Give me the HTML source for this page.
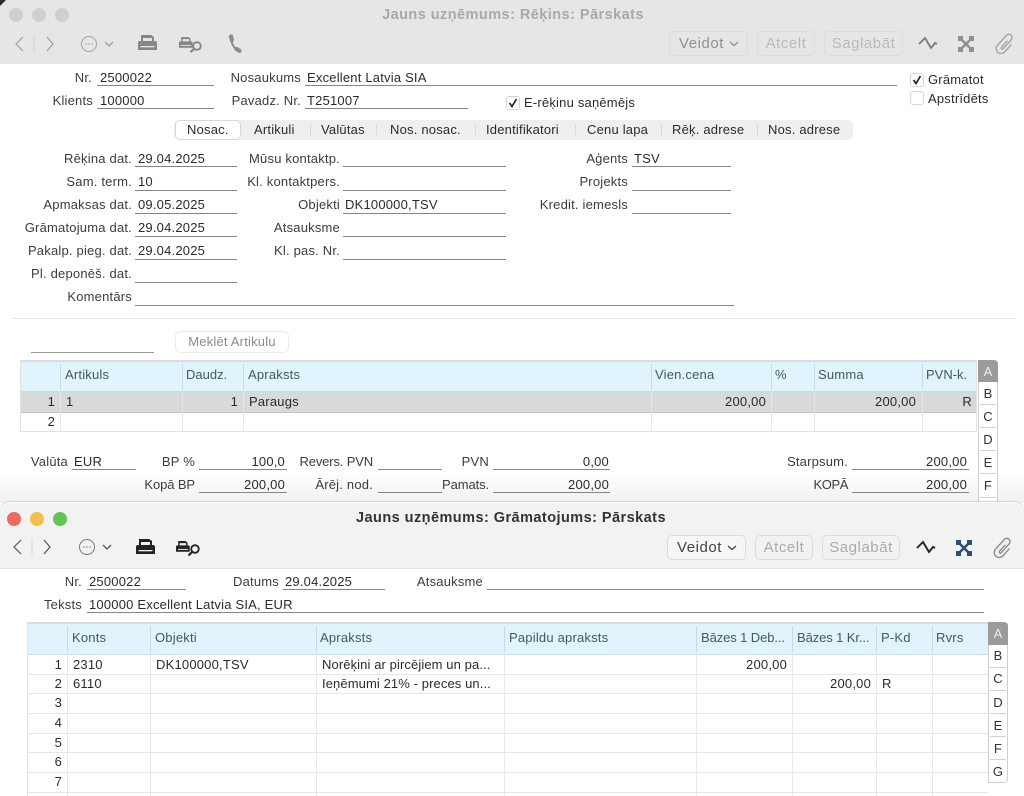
<!DOCTYPE html>
<html lang="lv"><head><meta charset="utf-8"><title>Jauns uzņēmums</title>
<style>
html,body{margin:0;padding:0;background:#fff}
body{position:relative;width:1024px;height:796px;overflow:hidden;font-family:"Liberation Sans",sans-serif;font-size:13px;letter-spacing:.2px;color:#2b2b2b}
#w{left:0;top:0;width:1024px;height:796px;overflow:hidden;filter:blur(.3px)}
div,svg{position:absolute}
.t{white-space:nowrap;line-height:16px;height:16px}
.l{color:#3c3c3c}
.h{color:#3f5a66}
.u{height:1px;background:#858585}
.v{width:1px;background:#e8e8e8}
.hr{height:1px;background:#e6e6e6}
.hs{width:1px;background:#c5dbe6;height:26px}
.btn{border:1px solid #dcdcdc;border-radius:5px;box-sizing:border-box;height:25px;line-height:23px;text-align:center;font-size:15px;letter-spacing:.55px}
.tb{width:20px;text-align:center;line-height:16px;color:#333}
.sep{width:16px;height:1px;background:#d2d2d2}
.ti{font-weight:bold;font-size:14.5px;letter-spacing:.45px}
</style></head><body><div id="w">

<!-- WINDOW 1 -->
<div style="left:0;top:0;width:1024px;height:64px;background:#e6e6e5"></div>
<div style="left:0;top:0;width:6px;height:6px;background:#2a2a2a;clip-path:polygon(0 0,100% 0,0 100%)"></div>
<div style="left:9px;top:8px;width:14px;height:14px;border-radius:50%;background:#cfcfcf"></div>
<div style="left:32px;top:8px;width:14px;height:14px;border-radius:50%;background:#cfcfcf"></div>
<div style="left:55px;top:8px;width:14px;height:14px;border-radius:50%;background:#cfcfcf"></div>
<div class="t ti" style="left:0;width:1026px;top:7px;text-align:center;color:#a9a9a9">Jauns uzņēmums: Rēķins: Pārskats</div>

<svg style="left:0;top:30px" width="300" height="30" fill="none" stroke="#a0a0a0">
<path d="M23 7l-7 7 7 7M47 7l6 7-6 7" stroke-width="1.200"/>
<path d="M34 6v16" stroke="#d0d0d0"/>
<circle cx="89" cy="14" r="7.500"/>
<path d="M85.500 14h1M88.500 14h1M91.500 14h1" stroke="#888" stroke-width="1.300"/>
<path d="M105 12l4 4 4-4" stroke-width="1.300"/>
<g transform="translate(138 5)" stroke="none" fill="#868686"><path d="M3 7V0h10l3 2v5h-2V3H5v4z"/><path d="M0 8a2 2 0 0 1 2-2h15a2 2 0 0 1 2 2v7H0z"/><rect x="2.500" y="11" width="14" height="1.300" fill="#e6e6e5"/></g>
<g transform="translate(179 7) scale(.72)" stroke="none" fill="#868686"><path d="M3 7V0h10l3 2v5h-2V3H5v4z"/><path d="M0 8a2 2 0 0 1 2-2h15a2 2 0 0 1 2 2v7H0z"/><rect x="2.500" y="11" width="14" height="1.300" fill="#e6e6e5"/></g>
<circle cx="197" cy="16" r="3.800" stroke="#868686" stroke-width="1.800"/><path d="M194 19l-3.500 3" stroke="#868686" stroke-width="2.200"/>
<path d="M231.500 8c-.5 5 2 10 7 12.500" stroke="#8a8a8a" stroke-width="2"/>
<path d="M231 6.500l.8 3.500M236.500 19l3 1.800" stroke="#8a8a8a" stroke-width="4.200" stroke-linecap="round"/>
</svg>

<div class="btn" style="left:669px;top:31px;width:79px;color:#8f8f8f;text-align:left;padding-left:9px">Veidot</div>
<svg style="left:728px;top:40px" width="12" height="8" fill="none" stroke="#8f8f8f" stroke-width="1.300"><path d="M2 2l4 3.500 4-3.500"/></svg>
<div class="btn" style="left:757px;top:31px;width:58px;color:#b9b9b9">Atcelt</div>
<div class="btn" style="left:824px;top:31px;width:79px;color:#b9b9b9">Saglabāt</div>
<svg style="left:915px;top:32px" width="105" height="24" fill="none">
<path d="M4 12l6-6 6 10 4-5 2 1" stroke="#7d7d7d" stroke-width="1.900"/>
<path d="M45 6l12 12M57 6L45 18" stroke="#909090" stroke-width="2.500"/>
<path d="M43 4h5v5h-5zM54 4h5v5h-5zM43 15h5v5h-5zM54 15h5v5h-5z" fill="#909090"/>
<g transform="translate(91 12) rotate(42) scale(1.100)"><path d="M4 -3V6a4.500 4.500 0 0 1 -9 0V-6a3 3 0 0 1 6 0V5a1 1 0 0 1 -2 0V-3" stroke="#a0a0a0" stroke-width="1.200"/></g>
</svg>

<div class="t l" style="right:932px;top:70px">Nr.</div><div class="t" style="left:100px;top:70px">2500022</div><div class="u" style="left:97px;top:85px;width:117px"></div>
<div class="t l" style="right:723px;top:70px">Nosaukums</div><div class="t" style="left:307px;top:70px">Excellent Latvia SIA</div><div class="u" style="left:305px;top:85px;width:592px"></div>
<div class="t l" style="right:931px;top:93px">Klients</div><div class="t" style="left:100px;top:93px">100000</div><div class="u" style="left:97px;top:108px;width:117px"></div>
<div class="t l" style="right:723px;top:93px">Pavadz. Nr.</div><div class="t" style="left:307px;top:93px">T251007</div><div class="u" style="left:305px;top:108px;width:163px"></div>

<div style="left:910px;top:73px;width:12px;height:12px;border:1px solid #d5d5d5;border-radius:3px;background:#fff"></div>
<svg style="left:910px;top:73px" width="14" height="14" fill="none" stroke="#222" stroke-width="1.700"><path d="M3.500 7l2.500 3.500 4.500-7.500"/></svg>
<div class="t" style="left:928px;top:72px">Grāmatot</div>
<div style="left:910px;top:91px;width:12px;height:12px;border:1px solid #d5d5d5;border-radius:3px;background:#fff"></div>
<div class="t" style="left:928px;top:91px">Apstrīdēts</div>
<div style="left:506px;top:96px;width:12px;height:12px;border:1px solid #d5d5d5;border-radius:3px;background:#fff"></div>
<svg style="left:506px;top:96px" width="14" height="14" fill="none" stroke="#222" stroke-width="1.700"><path d="M3.500 7l2.500 3.500 4.500-7.500"/></svg>
<div class="t" style="left:524px;top:95px">E-rēķinu saņēmējs</div>

<!-- tabs -->
<div style="left:174px;top:120px;width:679px;height:20px;background:#efefef;border-radius:6px"></div>
<div style="left:175px;top:120px;width:64px;height:18px;background:#fff;border:1px solid #d8d8d8;border-radius:5px"></div>
<div class="t" style="left:187px;top:122px">Nosac.</div>
<div class="t" style="left:254px;top:122px">Artikuli</div>
<div class="t" style="left:321px;top:122px">Valūtas</div>
<div class="t" style="left:390px;top:122px">Nos. nosac.</div>
<div class="t" style="left:486px;top:122px">Identifikatori</div>
<div class="t" style="left:587px;top:122px">Cenu lapa</div>
<div class="t" style="left:672px;top:122px">Rēķ. adrese</div>
<div class="t" style="left:768px;top:122px">Nos. adrese</div>
<div style="left:310px;top:124px;width:1px;height:11px;background:#d8d8d8"></div>
<div style="left:376px;top:124px;width:1px;height:11px;background:#d8d8d8"></div>
<div style="left:475px;top:124px;width:1px;height:11px;background:#d8d8d8"></div>
<div style="left:575px;top:124px;width:1px;height:11px;background:#d8d8d8"></div>
<div style="left:661px;top:124px;width:1px;height:11px;background:#d8d8d8"></div>
<div style="left:757px;top:124px;width:1px;height:11px;background:#d8d8d8"></div>

<!-- column 1 -->
<div class="t l" style="right:892px;top:151px">Rēķina dat.</div><div class="t" style="left:138px;top:151px">29.04.2025</div><div class="u" style="left:135px;top:166px;width:102px"></div>
<div class="t l" style="right:892px;top:174px">Sam. term.</div><div class="t" style="left:138px;top:174px">10</div><div class="u" style="left:135px;top:190px;width:102px"></div>
<div class="t l" style="right:892px;top:197px">Apmaksas dat.</div><div class="t" style="left:138px;top:197px">09.05.2025</div><div class="u" style="left:135px;top:213px;width:102px"></div>
<div class="t l" style="right:892px;top:220px">Grāmatojuma dat.</div><div class="t" style="left:138px;top:220px">29.04.2025</div><div class="u" style="left:135px;top:236px;width:102px"></div>
<div class="t l" style="right:892px;top:243px">Pakalp. pieg. dat.</div><div class="t" style="left:138px;top:243px">29.04.2025</div><div class="u" style="left:135px;top:259px;width:102px"></div>
<div class="t l" style="right:892px;top:266px">Pl. deponēš. dat.</div><div class="u" style="left:135px;top:282px;width:102px"></div>
<div class="t l" style="right:892px;top:289px">Komentārs</div><div class="u" style="left:135px;top:305px;width:599px"></div>
<!-- column 2 -->
<div class="t l" style="right:684px;top:151px">Mūsu kontaktp.</div><div class="u" style="left:343px;top:166px;width:163px"></div>
<div class="t l" style="right:684px;top:174px">Kl. kontaktpers.</div><div class="u" style="left:343px;top:190px;width:163px"></div>
<div class="t l" style="right:684px;top:197px">Objekti</div><div class="t" style="left:345px;top:197px">DK100000,TSV</div><div class="u" style="left:343px;top:213px;width:163px"></div>
<div class="t l" style="right:684px;top:220px">Atsauksme</div><div class="u" style="left:343px;top:236px;width:163px"></div>
<div class="t l" style="right:684px;top:243px">Kl. pas. Nr.</div><div class="u" style="left:343px;top:259px;width:163px"></div>
<!-- column 3 -->
<div class="t l" style="right:396px;top:151px">Aģents</div><div class="t" style="left:634px;top:151px">TSV</div><div class="u" style="left:632px;top:166px;width:99px"></div>
<div class="t l" style="right:396px;top:174px">Projekts</div><div class="u" style="left:632px;top:190px;width:99px"></div>
<div class="t l" style="right:396px;top:197px">Kredit. iemesls</div><div class="u" style="left:632px;top:213px;width:99px"></div>

<div class="hr" style="left:12px;top:318px;width:1004px"></div>
<div class="u" style="left:31px;top:352px;width:123px;background:#9a9a9a"></div>
<div style="left:175px;top:331px;width:114px;height:22px;box-sizing:border-box;border:1px solid #ececec;border-radius:5px;text-align:center;line-height:20px;color:#8a8a8a">Meklēt Artikulu</div>

<!-- table 1 -->
<div style="left:20px;top:360px;width:957px;height:72px;box-sizing:border-box;border:1px solid #e2e2e2;border-top:2px solid #dcdcdc"></div>
<div style="left:21px;top:362px;width:955px;height:30px;background:#e1f3fc"></div>
<div style="left:21px;top:391px;width:955px;height:2px;background:#c8dfe9"></div>
<div style="left:21px;top:393px;width:955px;height:19px;background:#d9d9d9"></div>
<div style="left:21px;top:412px;width:955px;height:1px;background:#c4c4c4"></div>
<div class="v" style="left:60px;top:393px;height:38px"></div><div class="v" style="left:182px;top:393px;height:38px"></div><div class="v" style="left:243px;top:393px;height:38px"></div><div class="v" style="left:651px;top:393px;height:38px"></div><div class="v" style="left:771px;top:393px;height:38px"></div><div class="v" style="left:814px;top:393px;height:38px"></div><div class="v" style="left:922px;top:393px;height:38px"></div>
<div class="hs" style="left:60px;top:364px"></div><div class="hs" style="left:182px;top:364px"></div><div class="hs" style="left:243px;top:364px"></div><div class="hs" style="left:651px;top:364px"></div><div class="hs" style="left:771px;top:364px"></div><div class="hs" style="left:814px;top:364px"></div><div class="hs" style="left:922px;top:364px"></div>
<div class="t h" style="left:65px;top:367px">Artikuls</div>
<div class="t h" style="left:186px;top:367px;letter-spacing:0">Daudz.</div>
<div class="t h" style="left:248px;top:367px">Apraksts</div>
<div class="t h" style="left:655px;top:367px">Vien.cena</div>
<div class="t h" style="left:775px;top:367px">%</div>
<div class="t h" style="left:818px;top:367px">Summa</div>
<div class="t h" style="left:926px;top:367px;letter-spacing:0">PVN-k.</div>
<div class="t" style="right:969px;top:394px">1</div><div class="t" style="left:66px;top:394px">1</div><div class="t" style="right:786px;top:394px">1</div><div class="t" style="left:249px;top:394px">Paraugs</div><div class="t" style="right:258px;top:394px">200,00</div><div class="t" style="right:108px;top:394px">200,00</div><div class="t" style="right:52px;top:394px">R</div>
<div class="t" style="right:969px;top:414px">2</div>

<!-- tab strip 1 -->
<div style="left:978px;top:360px;width:20px;height:150px;box-sizing:border-box;border:1px solid #cfcfcf;border-radius:0 4px 0 0;background:#fff"></div>
<div style="left:978px;top:360px;width:20px;height:22px;background:#9b9b9b;border-radius:0 4px 0 0"></div>
<div class="tb" style="left:978px;top:364px;color:#eee">A</div>
<div class="tb" style="left:978px;top:386px">B</div><div class="sep" style="left:980px;top:404px"></div>
<div class="tb" style="left:978px;top:409px">C</div><div class="sep" style="left:980px;top:427px"></div>
<div class="tb" style="left:978px;top:432px">D</div><div class="sep" style="left:980px;top:450px"></div>
<div class="tb" style="left:978px;top:455px">E</div><div class="sep" style="left:980px;top:473px"></div>
<div class="tb" style="left:978px;top:478px">F</div><div class="sep" style="left:980px;top:497px"></div>

<div style="left:0;top:470px;width:978px;height:33px;background:linear-gradient(rgba(236,236,236,0),rgba(236,236,236,.75))"></div>
<div style="left:998px;top:470px;width:26px;height:33px;background:linear-gradient(rgba(236,236,236,0),rgba(236,236,236,.75))"></div>

<!-- totals -->
<div class="t l" style="right:956px;top:454px">Valūta</div><div class="t" style="left:74px;top:454px">EUR</div><div class="u" style="left:72px;top:469px;width:64px"></div>
<div class="t l" style="right:829px;top:454px">BP %</div><div class="t" style="right:739px;top:454px">100,0</div><div class="u" style="left:199px;top:469px;width:88px"></div>
<div class="t l" style="right:651px;top:454px;letter-spacing:-.15px">Revers. PVN</div><div class="u" style="left:378px;top:469px;width:64px"></div>
<div class="t l" style="right:535px;top:454px">PVN</div><div class="t" style="right:415px;top:454px">0,00</div><div class="u" style="left:493px;top:469px;width:117px"></div>
<div class="t l" style="right:176px;top:454px">Starpsum.</div><div class="t" style="right:57px;top:454px">200,00</div><div class="u" style="left:852px;top:469px;width:117px"></div>
<div class="t l" style="right:829px;top:477px;letter-spacing:-.1px">Kopā BP</div><div class="t" style="right:739px;top:477px">200,00</div><div class="u" style="left:199px;top:492px;width:88px"></div>
<div class="t l" style="right:651px;top:477px">Ārēj. nod.</div><div class="u" style="left:378px;top:492px;width:64px"></div>
<div class="t l" style="right:535px;top:477px;letter-spacing:-.1px">Pamats.</div><div class="t" style="right:415px;top:477px">200,00</div><div class="u" style="left:493px;top:492px;width:117px"></div>
<div class="t l" style="right:176px;top:477px;letter-spacing:-.4px">KOPĀ</div><div class="t" style="right:57px;top:477px">200,00</div><div class="u" style="left:852px;top:492px;width:117px"></div>

<!-- WINDOW 2 -->
<div style="left:0;top:502px;width:1024px;height:294px;background:#fff;border-radius:10px 10px 0 0;box-shadow:0 -1px 1px #cfcfcf"></div>
<div style="left:0;top:503px;width:1024px;height:65px;background:#f2f2f1;border-bottom:1px solid #e0e0e0;border-radius:10px 10px 0 0"></div>
<div style="left:7px;top:512px;width:14px;height:14px;border-radius:50%;background:#ee6a5f"></div>
<div style="left:30px;top:512px;width:14px;height:14px;border-radius:50%;background:#f5bd4f"></div>
<div style="left:53px;top:512px;width:14px;height:14px;border-radius:50%;background:#61c554"></div>
<div class="t ti" style="left:0;width:1022px;top:510px;text-align:center;color:#333">Jauns uzņēmums: Grāmatojums: Pārskats</div>

<svg style="left:0;top:533px" width="300" height="30" fill="none" stroke="#555">
<path d="M21 7l-7 7 7 7M44 7l6 7-6 7" stroke-width="1.200"/>
<path d="M32 6v16" stroke="#d8d8d8"/>
<circle cx="87" cy="14" r="7.500" stroke="#777"/>
<path d="M83.500 14h1M86.500 14h1M89.500 14h1" stroke-width="1.300"/>
<path d="M103 12l4 4 4-4" stroke-width="1.300"/>
<g transform="translate(136 6)" stroke="none" fill="#222"><path d="M3 7V0h10l3 2v5h-2V3H5v4z"/><path d="M0 8a2 2 0 0 1 2-2h15a2 2 0 0 1 2 2v7H0z"/><rect x="2.500" y="11" width="14" height="1.300" fill="#f2f2f1"/></g>
<g transform="translate(176 8) scale(.72)" stroke="none" fill="#222"><path d="M3 7V0h10l3 2v5h-2V3H5v4z"/><path d="M0 8a2 2 0 0 1 2-2h15a2 2 0 0 1 2 2v7H0z"/><rect x="2.500" y="11" width="14" height="1.300" fill="#f2f2f1"/></g>
<circle cx="195" cy="16" r="3.800" stroke="#222" stroke-width="1.800"/><path d="M192 19l-3.500 3.500" stroke="#222" stroke-width="2.200"/>
</svg>

<div class="btn" style="left:667px;top:535px;width:79px;color:#444;background:#f6f6f5;text-align:left;padding-left:9px">Veidot</div>
<svg style="left:726px;top:544px" width="12" height="8" fill="none" stroke="#444" stroke-width="1.300"><path d="M2 2l4 3.500 4-3.500"/></svg>
<div class="btn" style="left:755px;top:535px;width:58px;color:#aaa">Atcelt</div>
<div class="btn" style="left:822px;top:535px;width:78px;color:#aaa">Saglabāt</div>
<svg style="left:913px;top:536px" width="105" height="24" fill="none">
<path d="M4 12l6-6 6 10 4-5 2 1" stroke="#222" stroke-width="1.900"/>
<path d="M45 6l12 12M57 6L45 18" stroke="#2d4f73" stroke-width="2.500"/>
<path d="M43 4h5v5h-5zM54 4h5v5h-5zM43 15h5v5h-5zM54 15h5v5h-5z" fill="#2d4f73"/>
<g transform="translate(91 12) rotate(42) scale(1.100)"><path d="M4 -3V6a4.500 4.500 0 0 1 -9 0V-6a3 3 0 0 1 6 0V5a1 1 0 0 1 -2 0V-3" stroke="#888" stroke-width="1.200"/></g>
</svg>

<div class="t l" style="right:942px;top:574px">Nr.</div><div class="t" style="left:89px;top:574px">2500022</div><div class="u" style="left:87px;top:589px;width:99px"></div>
<div class="t l" style="right:745px;top:574px">Datums</div><div class="t" style="left:285px;top:574px">29.04.2025</div><div class="u" style="left:283px;top:589px;width:102px"></div>
<div class="t l" style="right:541px;top:574px">Atsauksme</div><div class="u" style="left:487px;top:589px;width:497px"></div>
<div class="t l" style="right:942px;top:597px">Teksts</div><div class="t" style="left:89px;top:597px">100000 Excellent Latvia SIA, EUR</div><div class="u" style="left:87px;top:612px;width:897px"></div>

<!-- table 2 -->
<div style="left:27px;top:622px;width:962px;height:174px;box-sizing:border-box;border-left:1px solid #e2e2e2;border-top:2px solid #dcdcdc"></div>
<div style="left:28px;top:624px;width:960px;height:30px;background:#e1f3fc"></div>
<div style="left:28px;top:654px;width:960px;height:1px;background:#c8dfe9"></div>
<div class="hs" style="left:67px;top:626px"></div><div class="hs" style="left:150px;top:626px"></div><div class="hs" style="left:316px;top:626px"></div><div class="hs" style="left:504px;top:626px"></div><div class="hs" style="left:696px;top:626px"></div><div class="hs" style="left:792px;top:626px"></div><div class="hs" style="left:876px;top:626px"></div><div class="hs" style="left:932px;top:626px"></div>
<div class="v" style="left:67px;top:655px;height:141px"></div><div class="v" style="left:150px;top:655px;height:141px"></div><div class="v" style="left:316px;top:655px;height:141px"></div><div class="v" style="left:504px;top:655px;height:141px"></div><div class="v" style="left:696px;top:655px;height:141px"></div><div class="v" style="left:792px;top:655px;height:141px"></div><div class="v" style="left:876px;top:655px;height:141px"></div><div class="v" style="left:932px;top:655px;height:141px"></div>
<div class="hr" style="left:28px;top:674px;width:960px"></div><div class="hr" style="left:28px;top:693px;width:960px"></div><div class="hr" style="left:28px;top:713px;width:960px"></div><div class="hr" style="left:28px;top:733px;width:960px"></div><div class="hr" style="left:28px;top:752px;width:960px"></div><div class="hr" style="left:28px;top:772px;width:960px"></div><div class="hr" style="left:28px;top:792px;width:960px"></div>
<div class="t h" style="left:72px;top:630px">Konts</div>
<div class="t h" style="left:155px;top:630px">Objekti</div>
<div class="t h" style="left:320px;top:630px">Apraksts</div>
<div class="t h" style="left:509px;top:630px">Papildu apraksts</div>
<div class="t h" style="left:701px;top:630px;letter-spacing:-.1px">Bāzes 1 Deb...</div>
<div class="t h" style="left:797px;top:630px;letter-spacing:-.1px">Bāzes 1 Kr...</div>
<div class="t h" style="left:881px;top:630px">P-Kd</div>
<div class="t h" style="left:936px;top:630px">Rvrs</div>
<div class="t" style="right:962px;top:657px">1</div><div class="t" style="left:73px;top:657px">2310</div><div class="t" style="left:156px;top:657px">DK100000,TSV</div><div class="t" style="left:322px;top:657px;letter-spacing:.1px">Norēķini ar pircējiem un pa...</div><div class="t" style="right:237px;top:657px">200,00</div>
<div class="t" style="right:962px;top:676px">2</div><div class="t" style="left:73px;top:676px">6110</div><div class="t" style="left:322px;top:676px;letter-spacing:.1px">Ieņēmumi 21% - preces un...</div><div class="t" style="right:153px;top:676px">200,00</div><div class="t" style="left:882px;top:676px">R</div>
<div class="t" style="right:962px;top:695px">3</div>
<div class="t" style="right:962px;top:715px">4</div>
<div class="t" style="right:962px;top:735px">5</div>
<div class="t" style="right:962px;top:754px">6</div>
<div class="t" style="right:962px;top:774px">7</div>

<!-- tab strip 2 -->
<div style="left:988px;top:622px;width:20px;height:161px;box-sizing:border-box;border:1px solid #cfcfcf;border-radius:0 4px 4px 0;background:#fff"></div>
<div style="left:988px;top:622px;width:20px;height:23px;background:#9b9b9b;border-radius:0 4px 0 0"></div>
<div class="tb" style="left:988px;top:626px;color:#eee">A</div>
<div class="tb" style="left:988px;top:648px">B</div><div class="sep" style="left:990px;top:667px"></div>
<div class="tb" style="left:988px;top:671px">C</div><div class="sep" style="left:990px;top:690px"></div>
<div class="tb" style="left:988px;top:695px">D</div><div class="sep" style="left:990px;top:713px"></div>
<div class="tb" style="left:988px;top:718px">E</div><div class="sep" style="left:990px;top:736px"></div>
<div class="tb" style="left:988px;top:741px">F</div><div class="sep" style="left:990px;top:759px"></div>
<div class="tb" style="left:988px;top:764px">G</div>
</div></body></html>
